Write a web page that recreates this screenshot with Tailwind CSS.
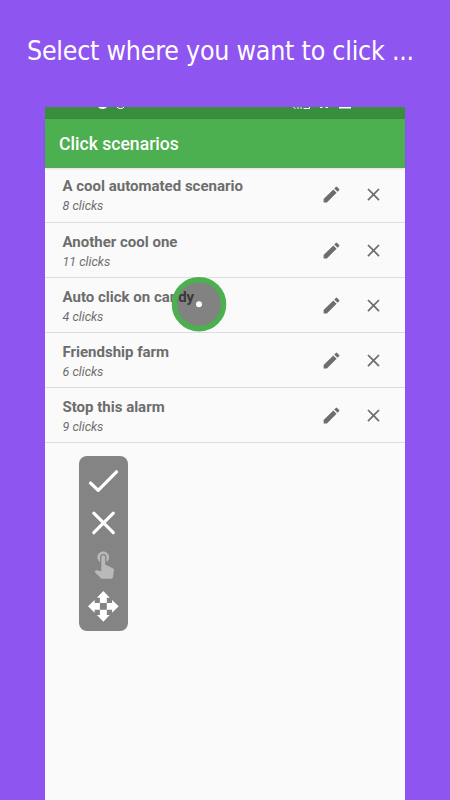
<!DOCTYPE html>
<html lang="en">
<head>
<meta charset="utf-8">
<title>Click scenarios</title>
<script src="https://cdn.jsdelivr.net/npm/@tailwindcss/browser@4"></script>
</head>
<body class="w-[450px] h-[800px] overflow-hidden bg-[#8f55f0] font-['Roboto',sans-serif]">
<svg class="hidden">
  <symbol id="pencil" viewBox="0 0 24 24"><path d="M3 17.25V21h3.75L17.81 9.94l-3.75-3.75L3 17.25z M20.71 7.04a.996.996 0 0 0 0-1.41l-2.34-2.34a.996.996 0 0 0-1.41 0l-1.83 1.83 3.75 3.75 1.83-1.83z"/></symbol>
  <symbol id="cross" viewBox="0 0 24 24"><path d="M19 6.41 17.59 5 12 10.59 6.41 5 5 6.41 10.59 12 5 17.59 6.41 19 12 13.41 17.59 19 19 17.59 13.41 12z"/></symbol>
</svg>
<div class="relative flex h-full flex-col">
  <h1 class="h-[107px] pt-[32px] pl-[27px] whitespace-nowrap text-white text-[26.5px] leading-[38px] tracking-[-0.22px] font-['DejaVu_Sans_Condensed','DejaVu_Sans',sans-serif] [font-stretch:condensed]">Select where you want to click ...</h1>
  <main class="mx-[45px] flex-1 bg-[#fafafa]">
    <div class="h-3 bg-[#388e3c]">
      <svg class="block" width="360" height="12" fill="#fff"><path d="M53 0h9q-1.500 2-4.500 2T53 0z"/><path d="M72 0q1 1.500 3.500 1.500T79 0" fill="none" stroke="#fff"/><path d="M248.500 0l2 2M253 0v2M256 0v2M258.500 1.500h6V0M275 .5h2.500M280.500 .5h2.500" fill="none" stroke="#fff"/><path d="M294 0h12v1.500h-12z"/></svg>
    </div>
    <header class="relative flex h-[48.900px] items-center bg-[#4caf50] pt-[2.500px] pl-3.5 text-[17.600px] font-medium text-white border-b border-[#58a45b] shadow-[0_1px_2px_#0000001c]">Click scenarios</header>
    <ul class="text-[#6d6d6d] fill-[#6d6d6d]">
      <li class="flex h-[55.1px] items-center border-b border-[#dedede] pl-[17.5px]"><div class="flex-1 pt-[3px]"><p class="text-[15px] leading-5 font-bold">A cool automated scenario</p><p class="text-[12.5px] leading-5 italic">8 clicks</p></div><svg class="mr-[21px] size-[21px]"><use href="#pencil"/></svg><svg class="mr-[21px] size-[21px]"><use href="#cross"/></svg></li>
      <li class="flex h-[55.1px] items-center border-b border-[#dedede] pl-[17.5px]"><div class="flex-1 pt-[3px]"><p class="text-[15px] leading-5 font-bold">Another cool one</p><p class="text-[12.5px] leading-5 italic">11 clicks</p></div><svg class="mr-[21px] size-[21px]"><use href="#pencil"/></svg><svg class="mr-[21px] size-[21px]"><use href="#cross"/></svg></li>
      <li class="flex h-[55.1px] items-center border-b border-[#dedede] pl-[17.5px]"><div class="flex-1 pt-[3px]"><p class="text-[15px] leading-5 font-bold">Auto click on candy</p><p class="text-[12.5px] leading-5 italic">4 clicks</p></div><svg class="mr-[21px] size-[21px]"><use href="#pencil"/></svg><svg class="mr-[21px] size-[21px]"><use href="#cross"/></svg></li>
      <li class="flex h-[55.1px] items-center border-b border-[#dedede] pl-[17.5px]"><div class="flex-1 pt-[3px]"><p class="text-[15px] leading-5 font-bold">Friendship farm</p><p class="text-[12.5px] leading-5 italic">6 clicks</p></div><svg class="mr-[21px] size-[21px]"><use href="#pencil"/></svg><svg class="mr-[21px] size-[21px]"><use href="#cross"/></svg></li>
      <li class="flex h-[55.1px] items-center border-b border-[#dedede] pl-[17.5px]"><div class="flex-1 pt-[3px]"><p class="text-[15px] leading-5 font-bold">Stop this alarm</p><p class="text-[12.5px] leading-5 italic">9 clicks</p></div><svg class="mr-[21px] size-[21px]"><use href="#pencil"/></svg><svg class="mr-[21px] size-[21px]"><use href="#cross"/></svg></li>
    </ul>
  </main>

  <svg class="absolute left-[171px] top-[276px]" width="56" height="56" viewBox="0 0 56 56"><circle cx="28" cy="28.200" r="23" fill="#000" fill-opacity=".48"/><circle cx="28" cy="28.200" r="24.500" fill="none" stroke="#4caf50" stroke-width="5.500"/><circle cx="28" cy="28.200" r="3" fill="#fff"/></svg>

  <div class="absolute left-[79px] top-[456.400px] flex h-[174.500px] w-[49px] flex-col rounded-[8px] bg-[#848484]">
    <svg width="49" height="174" viewBox="0 0 49 174" fill="none" stroke="#fff" stroke-width="3.200" stroke-linecap="round" stroke-linejoin="round">
      <path d="M11.500 27l7.700 7.300L37.500 15.800"/>
      <path d="M14.800 57.200l19.500 19.500M34.300 57.200L14.800 76.700"/>
      <g transform="translate(9.300 91.500)" fill="#b9b9b9" stroke="none"><path transform="scale(1.300)" d="M9 11.240V7.500a2.500 2.500 0 0 1 5 0v3.740c1.210-.81 2-2.180 2-3.740C16 5.010 13.990 3 11.500 3S7 5.010 7 7.500c0 1.560.79 2.930 2 3.740zm9.840 4.630l-4.540-2.260c-.17-.07-.35-.11-.54-.11H13v-6c0-.83-.67-1.500-1.500-1.500S10 6.670 10 7.500v10.740l-3.430-.72c-.08-.01-.15-.03-.24-.03-.31 0-.59.13-.79.33l-.79.80 4.940 4.940c.27.27.65.44 1.060.44h6.790c.75 0 1.330-.55 1.440-1.280l.75-5.270c.01-.07.02-.14.02-.20 0-.62-.38-1.160-.91-1.380z"/></g>
      <path transform="translate(9 135) scale(1.280)" fill="#fff" stroke="none" d="M12 0L17 5.200h-2.300v4.100H9.300V5.200H7zM12 24l5-5.200h-2.300v-4.100H9.300v4.100H7zM0 12L5.200 7v2.300h4.100v5.400H5.200V17zM24 12l-5.200-5v2.300h-4.100v5.400h4.100V17z"/>
    </svg>
  </div>
</div>
</body>
</html>
